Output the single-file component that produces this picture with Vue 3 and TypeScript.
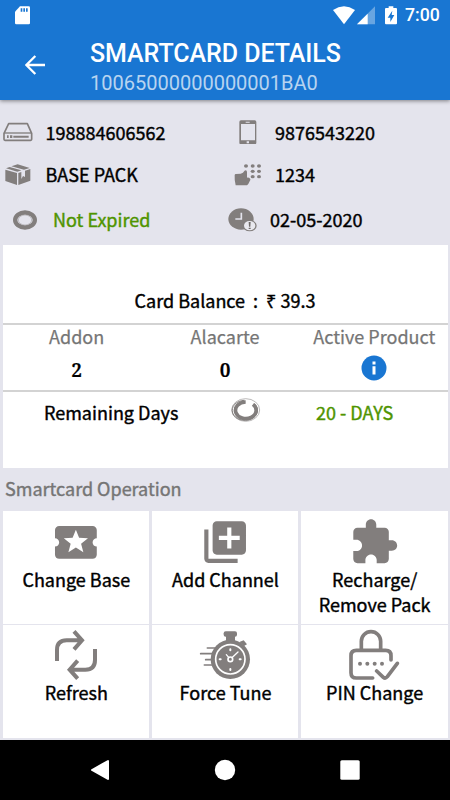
<script setup lang="ts">
interface Tile {
  id: string
  label: string[]
}

const tiles: Tile[] = [
  { id: 'base', label: ['Change Base'] },
  { id: 'add', label: ['Add Channel'] },
  { id: 'recharge', label: ['Recharge/', 'Remove Pack'] },
  { id: 'refresh', label: ['Refresh'] },
  { id: 'tune', label: ['Force Tune'] },
  { id: 'pin', label: ['PIN Change'] },
]
</script>

<template>
  <div class="screen">
    <header class="header">
      <div class="status">
        <svg class="sd" width="15" height="19" viewBox="0 0 45 57">
          <path fill="#fff" d="M15 1H41Q45 1 45 5V51Q45 55 41 55H4Q0 55 0 51V17Z" />
          <path fill="#1976d2" d="M17 7h5v10h-5zM25 7h5v10h-5zM33 7h5v10h-5z" />
        </svg>
        <div class="status-right">
          <svg width="22" height="19" viewBox="0 0 66 57">
            <path fill="#fff" d="M0 12Q33 -10 66 12L33 55Z" />
          </svg>
          <svg class="signal" width="18" height="19" viewBox="0 0 54 57">
            <path fill="#68a5e1" d="M0 55L54 1V55Z" />
            <path fill="#fff" d="M0 55L32 23V55Z" />
          </svg>
          <svg class="battery" width="12" height="19" viewBox="0 0 36 57">
            <path fill="#fff" d="M11 1H25V6H33Q36 6 36 9V52Q36 55 33 55H3Q0 55 0 52V9Q0 6 3 6H11Z" />
            <path fill="#1976d2" d="M22 14L8 35H16V48L28 27H20Z" />
          </svg>
          <span class="time">7:00</span>
        </div>
      </div>
      <div class="toolbar">
        <svg class="back" width="20" height="20" viewBox="0 0 60 60">
          <path fill="none" stroke="#fff" stroke-width="7" d="M60 30H5M31 3L4 30L31 57" />
        </svg>
        <div class="titles">
          <h1 class="title">SMARTCARD DETAILS</h1>
          <p class="subtitle">10065000000000001BA0</p>
        </div>
      </div>
    </header>

    <section class="details">
      <div class="cell">
        <svg class="i-drive" width="30" height="20" viewBox="8 36 90 60">
          <path fill="none" stroke="#827e7d" stroke-width="5" stroke-linejoin="round" d="M25 41H81L94 70V88Q94 91 91 91H14Q11 91 11 88V70Z" />
          <path fill="none" stroke="#827e7d" stroke-width="4" d="M11 69H94" />
          <path fill="#827e7d" d="M20 76h5v8h-5zM29 76h7v8h-7zM39 77h46v6h-46z" />
        </svg>
        <span>198884606562</span>
      </div>
      <div class="cell">
        <svg class="i-phone" width="18" height="24" viewBox="41 29 54 72">
          <path fill="#827e7d" fill-rule="evenodd" d="M47 30H88Q93 30 93 35V97Q93 102 88 102H47Q42 102 42 97V35Q42 30 47 30ZM47 41V90H89V41ZM61 34V37H73V34ZM64 93V99H71V93Z" />
        </svg>
        <span>9876543220</span>
      </div>
      <div class="cell">
        <svg class="i-box" width="26" height="22" viewBox="14 161 78 66">
          <path fill="#827e7d" d="M15 178L50 188V224L15 212ZM54 188L63 185V206L68 197L74 200V181L90 176V211L54 224Z" />
          <path fill="#827e7d" d="M17 174L28 170L63 180L51 184ZM33 168L52 162L88 173L71 178Z" />
        </svg>
        <span>BASE PACK</span>
      </div>
      <div class="cell">
        <svg class="i-hand" width="28" height="22" viewBox="26 160 84 66">
          <path fill="#827e7d" d="M28 194Q28 190 32 190L46 189Q54 187 57 181Q58 179 62 179Q65 180 65 185V201Q71 200 75 205Q76 208 73 212Q70 220 65 224H31Q27 210 28 194Z" />
          <g fill="#827e7d">
            <ellipse cx="62" cy="166" rx="6" ry="5" /><ellipse cx="82" cy="166" rx="6" ry="5" /><ellipse cx="101" cy="166" rx="6" ry="5" />
            <ellipse cx="82" cy="182" rx="6" ry="5" /><ellipse cx="101" cy="182" rx="6" ry="5" />
            <ellipse cx="82" cy="198" rx="6" ry="5" /><ellipse cx="101" cy="198" rx="6" ry="5" />
          </g>
        </svg>
        <span>1234</span>
      </div>
      <div class="cell">
        <svg class="i-ring" width="26" height="20" viewBox="36 298 78 60">
          <ellipse cx="75" cy="328" rx="29.5" ry="22.5" fill="none" stroke="#827e7d" stroke-width="13" />
          <ellipse cx="75" cy="328" rx="20" ry="15" fill="none" stroke="#aaa8aa" stroke-width="2" />
        </svg>
        <span class="green">Not Expired</span>
      </div>
      <div class="cell">
        <svg class="i-clock" width="30" height="24" viewBox="8 292 90 72">
          <ellipse cx="47" cy="325" rx="38" ry="32" fill="#827e7d" />
          <path fill="none" stroke="#e4e4ed" stroke-width="5" d="M48 306V325H30" />
          <ellipse cx="73" cy="345" rx="21" ry="17" fill="#827e7d" />
          <ellipse cx="73" cy="345" rx="17" ry="14" fill="#e9e9ef" />
          <path fill="#6e6a69" d="M70 334h6l-1 14h-4zM70 351h6v4h-6z" />
        </svg>
        <span>02-05-2020</span>
      </div>
    </section>

    <section class="card">
      <div class="balance"><span>Card Balance</span><span class="colon">:</span><span>₹ 39.3</span></div>
      <div class="stats">
        <div class="stat"><span class="stat-label">Addon</span><span class="stat-value">2</span></div>
        <div class="stat"><span class="stat-label">Alacarte</span><span class="stat-value">0</span></div>
        <div class="stat">
          <span class="stat-label">Active Product</span>
          <svg class="info" width="26" height="26" viewBox="0 0 26 26">
            <circle cx="13" cy="13" r="12.5" fill="#1976d2" />
            <path fill="#fff" d="M11.5 6.6h3v2.8h-3zM11.5 11.3h3v8.2h-3z" />
          </svg>
        </div>
      </div>
      <div class="remaining">
        <span class="remaining-label">Remaining Days</span>
        <svg class="i-progress" width="30" height="24" viewBox="20 353 90 72">
          <ellipse cx="64" cy="389" rx="42" ry="34" fill="none" stroke="#999696" stroke-width="2" />
          <path fill="none" stroke="#827e7d" stroke-width="11" d="M64 365A31 25 0 1 0 86 372" />
          <path fill="none" stroke="#827e7d" stroke-width="3" d="M60 360A38 30 0 1 0 90 370" />
        </svg>
        <span class="green">20 - DAYS</span>
      </div>
    </section>

    <h2 class="section-title">Smartcard Operation</h2>

    <section class="tiles">
      <button v-for="tile in tiles" :key="tile.id" class="tile" type="button">
        <svg v-if="tile.id === 'base'" width="60" height="55" viewBox="0 0 60 55">
          <path transform="translate(4.8 6.8) scale(2.09 2.05)" fill="#827e7d" d="M20 12c0-1.1.9-2 2-2V6c0-1.1-.9-2-2-2H4c-1.1 0-1.99.9-1.99 2v4c1.1 0 1.99.9 1.99 2s-.89 2-2 2v4c0 1.1.9 2 2 2h16c1.1 0 2-.9 2-2v-4c-1.1 0-2-.9-2-2zm-4.42 4.8L12 14.5l-3.58 2.3 1.08-4.12-3.29-2.69 4.24-.25L12 5.8l1.54 3.95 4.24.25-3.29 2.69 1.09 4.11z" />
        </svg>
        <svg v-else-if="tile.id === 'add'" width="60" height="55" viewBox="0 0 60 55">
          <path transform="translate(5.1 6.1) scale(2.085)" fill="#827e7d" d="M4 6H2v14c0 1.1.9 2 2 2h14v-2H4V6zm16-4H8c-1.1 0-2 .9-2 2v12c0 1.1.9 2 2 2h12c1.1 0 2-.9 2-2V4c0-1.1-.9-2-2-2zm-1 9h-4v4h-2v-4H9V9h4V5h2v4h4v2z" />
        </svg>
        <svg v-else-if="tile.id === 'recharge'" width="60" height="55" viewBox="0 0 60 55">
          <path transform="translate(5.1 6.2) scale(2.09)" fill="#827e7d" d="M20.5 11H19V7c0-1.1-.9-2-2-2h-4V3.5C13 2.12 11.88 1 10.5 1S8 2.12 8 3.5V5H4c-1.1 0-1.99.9-1.99 2v3.8H3.5c1.49 0 2.7 1.21 2.7 2.7s-1.21 2.7-2.7 2.7H2V20c0 1.1.9 2 2 2h3.8v-1.5c0-1.49 1.21-2.7 2.7-2.7 1.49 0 2.7 1.21 2.7 2.7V22H17c1.1 0 2-.9 2-2v-4h1.5c1.38 0 2.5-1.12 2.5-2.5S21.88 11 20.5 11z" />
        </svg>
        <svg v-else-if="tile.id === 'refresh'" width="60" height="55" viewBox="138 15 180 165">
          <path fill="none" stroke="#827e7d" stroke-width="12" d="M171 123V90Q171 61 200 61H245M222 34L246 61L222 88M285 87V120Q285 149 256 149H210M233 122L209 149L233 176" />
        </svg>
        <svg v-else-if="tile.id === 'tune'" width="60" height="55" viewBox="15 15 180 165">
          <rect x="101" y="34" width="40" height="16" rx="6" fill="#827e7d" />
          <path fill="#827e7d" d="M108 48h27v16h-27zM148 66L162 78L171 73L161 61Z" />
          <circle cx="121" cy="118" r="59" fill="#827e7d" />
          <circle cx="121" cy="118" r="44" fill="none" stroke="#fff" stroke-width="5" />
          <g fill="none" stroke="#fff" stroke-width="6" stroke-linecap="round">
            <path d="M121 88v3M121 147v3M89 118h3M149 118h3" />
            <path d="M121 118L144 96M121 118L109 104" stroke-width="4" />
          </g>
          <circle cx="121" cy="118" r="7" fill="#827e7d" stroke="#fff" stroke-width="5" />
          <path stroke="#827e7d" stroke-width="5" stroke-linecap="round" d="M52 84H78M32 101H70M47 119H64M43 135H68" />
        </svg>
        <svg v-else width="60" height="55" viewBox="132 15 180 165">
          <g fill="none" stroke="#827e7d" stroke-width="11" stroke-linecap="round" stroke-linejoin="round">
            <path d="M184 89V64A29 29 0 0 1 242 64V89" />
            <path d="M273 120V107Q273 91 257 91H169Q153 91 153 107V158Q153 174 169 174H218" />
            <path d="M230 153L250 172Q256 177 262 170L292 130" />
          </g>
          <g fill="#827e7d">
            <circle cx="180" cy="131" r="6" /><circle cx="202" cy="131" r="6" /><circle cx="224" cy="131" r="6" /><circle cx="246" cy="131" r="6" />
          </g>
        </svg>
        <span v-for="line in tile.label" :key="line" class="tile-line">{{ line }}</span>
      </button>
    </section>

    <nav class="nav">
      <svg width="20" height="22" viewBox="0 0 20 22">
        <path fill="#fff" stroke="#fff" stroke-width="2" stroke-linejoin="round" d="M2 11L18 2V20Z" />
      </svg>
      <svg width="22" height="22" viewBox="0 0 22 22"><circle cx="11" cy="11" r="10.2" fill="#fff" /></svg>
      <svg width="20" height="22" viewBox="0 0 20 22"><rect x="0.3" y="1.2" width="19.4" height="19.6" rx="1.5" fill="#fff" /></svg>
    </nav>
  </div>
</template>

<style>
body {
  margin: 0;
}
</style>

<style scoped>
.screen {
  width: 450px;
  height: 800px;
  display: flex;
  flex-direction: column;
  overflow: hidden;
  box-sizing: border-box;
  background: #e4e4ed;
  color: #000;
  font-family: "Noto Sans CJK SC", "Noto Sans", sans-serif;
  font-size: 18px;
  font-weight: 400;
  line-height: 24px;
  white-space: nowrap;
  -webkit-text-stroke: 0.4px currentColor;
}
svg {
  display: block;
  flex: none;
}
.header {
  height: 100px;
  flex: none;
  background: #1976d2;
  box-shadow: 0 1px 4px rgba(0, 0, 0, 0.45);
  color: #fff;
  font-family: Roboto, sans-serif;
  -webkit-text-stroke: 0;
}
.status {
  height: 30px;
  display: flex;
  align-items: center;
  justify-content: space-between;
  padding: 0 11px 0 15px;
}
.status-right {
  display: flex;
  align-items: center;
}
.signal {
  margin-left: 2px;
}
.battery {
  margin-left: 10px;
}
.time {
  width: 34px;
  margin-left: 8px;
  font-size: 17.7px;
  font-weight: 500;
  line-height: 32px;
}
.toolbar {
  height: 70px;
  display: flex;
  padding-left: 25px;
}
.back {
  margin-top: 25px;
}
.titles {
  margin-left: 45px;
}
.title {
  margin: 0;
  padding-top: 8px;
  font-size: 25px;
  font-weight: 500;
  line-height: 31px;
  letter-spacing: -0.06px;
}
.subtitle {
  margin: 0;
  padding-top: 2px;
  font-size: 20px;
  font-weight: 400;
  line-height: 24px;
  color: rgba(255, 255, 255, 0.7);
}
.details {
  height: 145px;
  flex: none;
  box-sizing: border-box;
  padding-top: 10px;
  display: grid;
  grid-template-columns: 225px 225px;
  grid-template-rows: 44px 41px 49px;
}
.cell {
  display: flex;
  align-items: center;
}
.cell span {
  padding-bottom: 1px;
}
.i-drive { margin: 0 12.5px 0 3px; }
.i-phone { margin: 0 18px 0 14px; }
.i-box { margin: 0 14.5px 0 5px; }
.i-hand { margin: 0 13px 0 9px; }
.i-ring { margin: 0 15px 0 12px; }
.i-clock { margin: 0 12px 0 3px; }
.green {
  color: #4f9400;
}
.card {
  height: 223px;
  flex: none;
  margin: 0 2.5px;
  background: #fff;
}
.balance {
  height: 78px;
  box-sizing: border-box;
  padding-top: 32px;
  display: flex;
  align-items: center;
  justify-content: center;
}
.colon {
  margin: 0 8px;
}
.stats {
  height: 65px;
  display: grid;
  grid-template-columns: repeat(3, 1fr);
  border-top: 2px solid #d3d3d3;
  border-bottom: 2px solid #d3d3d3;
}
.stat {
  display: flex;
  flex-direction: column;
  align-items: center;
}
.stat:last-child {
  padding-left: 2px;
}
.stat-label {
  height: 24px;
  line-height: 23px;
  color: #757575;
  -webkit-text-stroke: 0.25px currentColor;
}
.stat-value {
  font-family: "Noto Serif", "DejaVu Serif", "Liberation Serif", serif;
  font-size: 19px;
  font-weight: 600;
  line-height: 42px;
  -webkit-text-stroke: 0.2px currentColor;
}
.info {
  margin-top: 6px;
}
.remaining {
  height: 39px;
  display: flex;
  align-items: center;
  padding-left: 41.5px;
}
.remaining-label {
  width: 134px;
}
.i-progress {
  margin: 0 55px 3px 53px;
}
.section-title {
  height: 43px;
  flex: none;
  margin: 0;
  padding-left: 5px;
  font-size: 18px;
  font-weight: 400;
  line-height: 41px;
  color: #757575;
}
.tiles {
  height: 229px;
  flex: none;
  box-sizing: border-box;
  padding: 0 2.5px 2.5px;
  display: grid;
  grid-template-columns: repeat(3, 1fr);
  grid-template-rows: 113px 112.5px;
  gap: 1px 2.5px;
}
.tile {
  display: flex;
  flex-direction: column;
  align-items: center;
  border: 0;
  padding: 0;
  background: #fff;
  color: inherit;
  font: inherit;
}
.tile-line {
  padding-left: 1px;
  line-height: 25px;
}
.tile:nth-child(-n + 3) svg {
  margin-bottom: 1px;
}
.tile:nth-child(n + 4) svg {
  margin-bottom: -0.5px;
}
.nav {
  height: 60px;
  flex: none;
  display: flex;
  align-items: center;
  justify-content: center;
  gap: 104px;
  background: #000;
}
</style>
